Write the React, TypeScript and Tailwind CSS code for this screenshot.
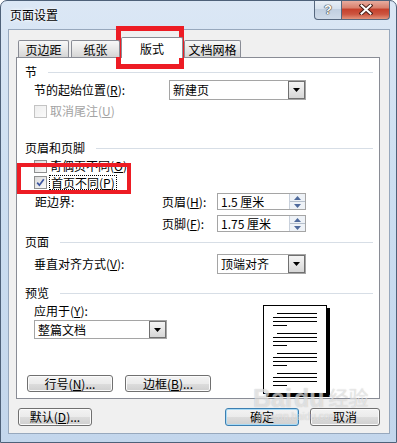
import React from "react";

function Acc({ c }: { c: string }) {
  return (
    <span>
      (<span className="underline underline-offset-[1px]">{c}</span>)
    </span>
  );
}

function Arrow() {
  return (
    <svg width="7" height="4" viewBox="0 0 7 4">
      <path d="M0 0 H7 L3.5 4 Z" fill="#000" />
    </svg>
  );
}

function Combo({ text, className }: { text: string; className: string }) {
  return (
    <div className={`flex border border-[#a5a5a5] bg-white ${className}`}>
      <div className="flex-1 flex items-center pl-[3px] leading-[14px]">{text}</div>
      <div className="w-[17px] h-full border border-[#707070] bg-[linear-gradient(#f4f4f4,#e6e6e6_50%,#d6d6d6)] flex items-center justify-center">
        <Arrow />
      </div>
    </div>
  );
}

function Spin({ text }: { text: string }) {
  return (
    <div className="flex w-[89px] h-[17px] border border-[#a5a5a5] bg-white">
      <div className="flex-1 flex items-center pl-[3px] leading-[14px]">{text}</div>
      <div className="w-[16px] h-full flex flex-col border-l border-[#c9d1dc] bg-[#eef2f7]">
        <div className="flex-1 flex items-center justify-center border-b border-[#b5bfcc]">
          <svg width="7" height="4" viewBox="0 0 7 4">
            <path d="M0 4 H7 L3.5 0 Z" fill="#4f6a9c" />
          </svg>
        </div>
        <div className="flex-1 flex items-center justify-center">
          <svg width="7" height="4" viewBox="0 0 7 4">
            <path d="M0 0 H7 L3.5 4 Z" fill="#4f6a9c" />
          </svg>
        </div>
      </div>
    </div>
  );
}

function Check({ checked, disabled }: { checked?: boolean; disabled?: boolean }) {
  return (
    <span
      className={`w-[13px] h-[13px] shrink-0 flex items-center justify-center border ${
        disabled
          ? "border-[#c4c4c4] bg-[linear-gradient(135deg,#eeeeee,#fafafa)]"
          : "border-[#8e8f8f] bg-[linear-gradient(135deg,#d8d8d8,#fbfbfb)]"
      }`}
    >
      {checked && (
        <svg width="9" height="9" viewBox="0 0 9 9">
          <path d="M1.2 4.6 L3.4 7.2 L7.8 1.2" fill="none" stroke="#3d56a0" strokeWidth="1.7" />
        </svg>
      )}
    </span>
  );
}

function Group({ t, className }: { t: string; className: string }) {
  return (
    <div className={`flex items-center h-[16px] pl-[8px] pr-[6px] ${className}`}>
      <span className="leading-[16px]">{t}</span>
      <div className="ml-[11px] flex-1 h-px bg-[#d7dee6]" />
    </div>
  );
}

function Btn({ children, className, focus }: { children: React.ReactNode; className: string; focus?: boolean }) {
  return (
    <div
      className={`flex items-center justify-center rounded-[3px] border leading-[14px] bg-[linear-gradient(#f3f3f3_0%,#ebebeb_50%,#dddddd_51%,#cfcfcf_100%)] ${
        focus ? "border-[#3c7fb1] shadow-[inset_0_0_0_1px_#a9dbf6]" : "border-[#707070] shadow-[inset_0_0_0_1px_#fbfbfb]"
      } ${className}`}
    >
      {children}
    </div>
  );
}

const tab =
  "h-[17px] mb-px border border-b-0 border-[#898c95] rounded-t-[2px] bg-[linear-gradient(#f8f8f8,#e8e8e8_50%,#d5d5d5)] flex items-center justify-center leading-[15px]";

export default function App() {
  return (
    <div className="relative w-[397px] h-[443px] overflow-hidden rounded-t-[7px] border border-[#4e6179] bg-[linear-gradient(#dbe7f5,#cddff1_40%,#c3d6ec)] text-[12px] text-black font-['Noto_Sans_CJK_SC','Noto_Sans',sans-serif] flex flex-col">
      {/* title bar */}
      <div className="h-[28px] flex items-start">
        <div className="pl-[9px] pt-[6px] leading-[16px] [text-shadow:0_0_4px_#ffffff,0_0_2px_#ffffff]">页面设置</div>
        <div className="ml-auto mr-[6px] flex -mt-px">
          <div className="w-[28px] h-[20px] border border-[#56677e] border-t-0 rounded-bl-[4px] bg-[linear-gradient(#eaf0f7,#d6e1ee_45%,#c1cfe0_50%,#cfdbe9)] flex items-center justify-center text-white font-bold text-[13px] font-['Liberation_Sans',sans-serif] [text-shadow:0_0_1px_#333,0_0_1px_#333,0_0_1px_#333]">
            ?
          </div>
          <div className="w-[48px] h-[20px] border border-[#56677e] border-t-0 border-l-0 rounded-br-[4px] bg-[linear-gradient(#eab2a6,#d9826f_40%,#c6412d_50%,#cc5540_75%,#e4947c)] flex items-center justify-center">
            <svg width="14" height="11" viewBox="0 0 14 11">
              <path d="M2.5 1.5 L11.5 9.5 M11.5 1.5 L2.5 9.5" stroke="#4a2019" strokeWidth="4" strokeLinecap="square" />
              <path d="M2.5 1.5 L11.5 9.5 M11.5 1.5 L2.5 9.5" stroke="#ffffff" strokeWidth="2" strokeLinecap="square" />
            </svg>
          </div>
        </div>
      </div>

      {/* client area */}
      <div className="ml-[7px] w-[382px] h-[405px] border border-[#97a8bd] bg-[#f0f0f0] flex flex-col">
        {/* tabs */}
        <div className="relative z-10 flex items-end h-[21px] mt-[7px] ml-[9px] -mb-px">
          <div className={`${tab} w-[51px] mr-[2px]`}>页边距</div>
          <div className={`${tab} w-[49px] mr-[1px]`}>纸张</div>
          <div className="w-[62px] h-[21px] mr-[1px] bg-white border border-b-0 border-[#898c95] rounded-t-[2px] flex justify-center pt-[4px] leading-[14px]">
            版式
          </div>
          <div className={`${tab} w-[57px]`}>文档网格</div>
        </div>

        {/* panel */}
        <div className="ml-[7px] w-[364px] h-[342px] border border-[#898c95] bg-white flex flex-col">
          <Group t="节" className="mt-[6px] h-[15px]" />
          <div className="flex items-center h-[20px] pl-[17px]">
            <div className="w-[135px] leading-[16px]">
              节的起始位置<Acc c="R" />:
            </div>
            <Combo text="新建页" className="w-[137px] h-[20px]" />
          </div>
          <div className="flex items-center h-[16px] mt-[3px] pl-[17px] text-[#a3a3a3]">
            <Check disabled />
            <span className="ml-[3px] leading-[16px]">
              取消尾注<Acc c="U" />
            </span>
          </div>

          <Group t="页眉和页脚" className="mt-[21px]" />
          <div className="flex items-center h-[16px] mt-[2px] pl-[17px]">
            <Check />
            <span className="ml-[3px] leading-[16px]">
              奇偶页不同<Acc c="O" />
            </span>
          </div>
          <div className="flex items-center h-[16px] pl-[17px]">
            <Check checked />
            <span className="ml-[2px] px-[1px] border border-dotted border-black leading-[13px]">
              首页不同<Acc c="P" />
            </span>
          </div>
          <div className="flex items-center h-[17px] mt-[3px] pl-[18px]">
            <div className="w-[127px] leading-[16px]">距边界:</div>
            <div className="w-[55px] leading-[16px]">
              页眉<Acc c="H" />:
            </div>
            <Spin text="1.5 厘米" />
          </div>
          <div className="flex items-center h-[17px] mt-[5px] pl-[18px]">
            <div className="w-[127px]" />
            <div className="w-[55px] leading-[16px]">
              页脚<Acc c="F" />:
            </div>
            <Spin text="1.75 厘米" />
          </div>

          <Group t="页面" className="mt-[2px]" />
          <div className="flex items-center h-[20px] mt-[4px] pl-[17px]">
            <div className="w-[183px] leading-[16px]">
              垂直对齐方式<Acc c="V" />:
            </div>
            <Combo text="顶端对齐" className="w-[89px] h-[20px]" />
          </div>

          <Group t="预览" className="mt-[11px]" />
          <div className="flex flex-1">
            <div className="w-[246px] pl-[8px] flex flex-col pb-[6px]">
              <div className="mt-[2px] ml-[9px] h-[16px] leading-[16px]">
                应用于<Acc c="Y" />:
              </div>
              <Combo text="整篇文档" className="mt-[1px] ml-[9px] w-[133px] h-[19px]" />
              <div className="mt-auto ml-[2px] flex gap-[12px]">
                <Btn className="w-[86px] h-[17px]">
                  行号<Acc c="N" />...
                </Btn>
                <Btn className="w-[86px] h-[17px]">
                  边框<Acc c="B" />...
                </Btn>
              </div>
            </div>
            <div className="mt-[4px] w-[64px] h-[89px] border border-black bg-white shadow-[3px_3px_0_#000]">
              <svg width="62" height="87" viewBox="0 0 62 87">
                {[0, 20, 40, 60].map((o) => (
                  <g key={o} stroke="#000" strokeWidth="1">
                    <path d={`M13 ${7.5 + o} H53`} />
                    <path d={`M9 ${11.5 + o} H53`} />
                    <path d={`M9 ${15.5 + o} H53`} />
                    <path d={`M9 ${19.5 + o} H23`} />
                  </g>
                ))}
              </svg>
            </div>
          </div>
        </div>

        {/* bottom buttons */}
        <div className="flex mt-[9px] pl-[9px]">
          <Btn className="w-[74px] h-[18px]">
            默认<Acc c="D" />...
          </Btn>
          <Btn focus className="ml-[133px] w-[74px] h-[18px]">
            确定
          </Btn>
          <Btn className="ml-[11px] w-[70px] h-[18px]">取消</Btn>
        </div>
      </div>

      {/* watermark */}
      <div className="absolute left-[252px] top-[384px] pointer-events-none text-[rgba(255,255,255,0.55)] [text-shadow:0_0_1px_rgba(120,120,120,0.45)]">
        <div className="flex items-end leading-[26px]">
          <span className="text-[25px] font-bold font-['Liberation_Sans',sans-serif]">Bai</span>
          <span className="text-[25px] font-bold font-['Liberation_Sans',sans-serif] ml-[2px]">du</span>
          <span className="text-[20px] ml-[4px]">经验</span>
        </div>
        <div className="text-[10px] leading-[11px] ml-[4px] font-['Liberation_Sans',sans-serif]">jingyan.baidu.com</div>
      </div>

      {/* red annotation boxes */}
      <div className="absolute left-[115px] top-[25px] w-[68px] h-[43px] border-[5px] border-[#ed1c24]" />
      <div className="absolute left-[16px] top-[162px] w-[114px] h-[31px] border-[4px] border-[#ed1c24]" />
    </div>
  );
}
